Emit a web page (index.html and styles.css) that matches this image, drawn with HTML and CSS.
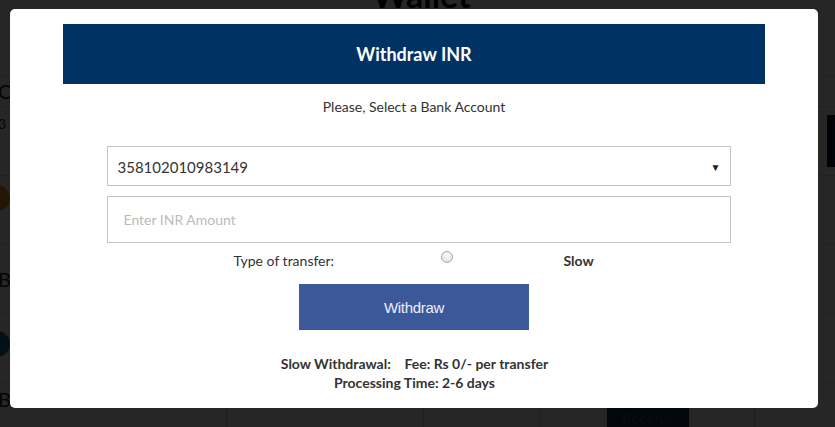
FILE: index.html
```html
<!DOCTYPE html>
<html>
<head>
<meta charset="utf-8">
<link rel="stylesheet" href="styles.css">
</head>
<body>
<div class="page">
  <h1 class="page-title">Wallet</h1>
  <div class="table">
    <div class="row row-head"><span class="cell-text">Currency</span></div>
    <div class="row"><span class="cell-text small">3</span><span class="navy-btn side"></span></div>
    <div class="row"><span class="coin btc"></span></div>
    <div class="row"><span class="cell-text">Bitcoin</span></div>
    <div class="row"><span class="coin xrp"></span></div>
    <div class="row last">
      <span class="col c1"><span class="cell-text">Bitcoin</span></span><span class="col c2"></span><span class="col c3"></span>
      <span class="recv">Receive</span><span class="col c4"></span>
    </div>
  </div>
</div>
<div class="overlay"></div>
<div class="modal">
  <div class="modal-head">Withdraw INR</div>
  <p class="prompt">Please, Select a Bank Account</p>
  <div class="form">
    <div class="select">
      <span>358102010983149</span>
      <span class="caret">&#9660;</span>
    </div>
    <div class="input">Enter INR Amount</div>
    <div class="type-row">
      <span class="type-label">Type of transfer:</span>
      <span class="radio"></span>
      <span class="type-value">Slow</span>
    </div>
  </div>
  <button class="withdraw">Withdraw</button>
  <div class="info">
    <div>Slow Withdrawal:&nbsp;&nbsp;&nbsp; Fee: Rs 0/- per transfer</div>
    <div>Processing Time: 2-6 days</div>
  </div>
</div>
</body>
</html>
```
FILE: styles.css
```css
* { box-sizing: border-box; }
html, body { margin: 0; padding: 0; }
body {
  width: 835px;
  height: 427px;
  overflow: hidden;
  background: #fff;
  font-family: Lato, "Open Sans", sans-serif;
  color: #333;
}
.page { position: relative; height: 427px; overflow: hidden; }
.page-title {
  margin: -22px 0 0;
  text-align: center;
  font-size: 34px;
  font-weight: 700;
  color: #111;
  line-height: 1;
  height: 97px;
  padding-left: 8px;
}
.table { display: flex; flex-direction: column; }
.row {
  position: relative;
  height: 69px;
  flex: none;
  border-bottom: 1px solid #ddd;
  display: flex;
  align-items: center;
}
.row-head { height: 32px; border-top: 1px solid #ddd; }
.cell-text { font-size: 20px; margin-left: -2px; color: #222; }
.cell-text.small { font-size: 14px; align-self: flex-start; margin-top: 8px; }
.navy-btn.side {
  position: absolute;
  right: -20px;
  top: 8px;
  width: 28px;
  height: 52px;
  background: #0d1a3a;
}
.coin { width: 26px; height: 26px; border-radius: 50%; margin-left: -16px; margin-top: -24px; }
.btc { background: #f7931a; }
.xrp { background: #1b6f9a; margin-top: -8px; }
.row.last { border-bottom: none; height: 60px; align-items: stretch; }
.col { height: 100%; border-right: 1px solid #ccc; display: flex; align-items: flex-start; }
.c1 { width: 227px; padding-top: 4px; }
.c2 { width: 197px; }
.c3 { width: 117px; }
.recv {
  width: 82px;
  margin-left: 66px;
  background: #16284e;
  color: #2f4a85;
  font-weight: 700;
  font-size: 15px;
  display: flex;
  align-items: flex-start;
  justify-content: center;
  padding-top: 26px;
}
.c4 { width: 66px; }
.overlay {
  position: fixed;
  inset: 0;
  background: rgba(0, 0, 0, 0.85);
}
.modal {
  position: fixed;
  left: 10px;
  top: 9px;
  width: 808px;
  height: 399px;
  background: #fff;
  border-radius: 5px;
  padding: 15px 53px 0;
  display: flex;
  flex-direction: column;
  align-items: center;
}
.modal-head {
  width: 702px;
  height: 60px;
  flex: none;
  background: #003363;
  color: #fff;
  font-weight: 700;
  font-size: 18px;
  display: flex;
  align-items: center;
  justify-content: center;
  padding-bottom: 1px;
}
.prompt {
  margin: 14px 0 0;
  font-size: 14px;
  line-height: 18px;
  color: #333;
}
.form {
  width: 624px;
  margin: 30px 0 0 9px;
  display: flex;
  flex-direction: column;
}
.select {
  height: 40px;
  border: 1px solid #c4c4c4;
  display: flex;
  align-items: center;
  justify-content: space-between;
  padding: 2px 9px 0 10px;
  font-size: 15px;
  color: #333;
}
.caret { font-size: 10px; color: #222; }
.input {
  margin-top: 10px;
  height: 47px;
  border: 1px solid #c4c4c4;
  display: flex;
  align-items: center;
  padding: 0 0 1px 16px;
  font-size: 14px;
  color: #bbb;
}
.type-row {
  margin-top: 6px;
  height: 20px;
  display: flex;
  align-items: center;
  font-size: 14px;
  color: #333;
}
.type-label { margin-left: 127px; width: 207px; padding-top: 3px; }
.radio {
  width: 12px;
  height: 12px;
  border-radius: 50%;
  border: 1px solid #a9a9a9;
  background: radial-gradient(circle at 50% 35%, #fafafa, #dcdcdc);
  margin-top: -5px;
}
.type-value { margin-left: 111px; font-weight: 700; padding-top: 3px; }
.withdraw {
  margin: 15px 0 0 0;
  width: 230px;
  height: 46px;
  flex: none;
  border: none;
  background: #3b5998;
  color: #eef;
  font-family: "Liberation Sans", Arial, sans-serif;
  font-size: 15px;
  letter-spacing: -0.3px;
}
.info {
  margin-top: 24px;
  text-align: center;
  font-size: 14px;
  font-weight: 700;
  line-height: 19px;
  color: #333;
  padding-left: 1px;
}
```
